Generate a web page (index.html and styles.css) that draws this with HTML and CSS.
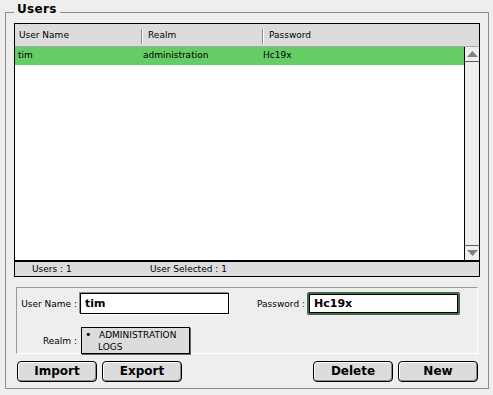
FILE: index.html
```html
<!DOCTYPE html>
<html>
<head>
<meta charset="utf-8">
<link rel="stylesheet" href="styles.css">
</head>
<body>
<div class="group">
  <div class="title">Users</div>
  <div class="table">
    <div class="thead">
      <div class="th c1">User Name</div>
      <div class="th c2 sep">Realm</div>
      <div class="th c3 sep">Password</div>
    </div>
    <div class="tbody">
      <div class="list">
        <div class="row sel">
          <div class="td c1">tim</div>
          <div class="td c2">administration</div>
          <div class="td c3">Hc19x</div>
        </div>
      </div>
      <div class="scroll">
        <div class="sbtn up"><svg width="11" height="6" viewBox="0 0 11 6"><polygon points="5.5,0 11,6 0,6" fill="#808080"/></svg></div>
        <div class="track"></div>
        <div class="sbtn down"><svg width="11" height="6" viewBox="0 0 11 6"><polygon points="0,0 11,0 5.5,6" fill="#808080"/></svg></div>
      </div>
    </div>
    <div class="status">
      <span class="st1">Users : 1</span>
      <span class="st2">User Selected : 1</span>
    </div>
  </div>
  <div class="edit">
    <div class="erow">
      <label class="lbl">User Name :</label>
      <div class="field name">tim</div>
      <label class="lbl lbl2">Password :</label>
      <div class="focus"><div class="field pass">Hc19x</div></div>
    </div>
    <div class="erow realmrow">
      <label class="lbl">Realm :</label>
      <div class="realm">
        <div class="opt"><span class="dot">•</span>ADMINISTRATION</div>
        <div class="opt opt2">LOGS</div>
      </div>
    </div>
  </div>
  <div class="buttons">
    <button class="btn">Import</button>
    <button class="btn">Export</button>
    <div class="spacer"></div>
    <button class="btn">Delete</button>
    <button class="btn">New</button>
  </div>
</div>
</body>
</html>
```
FILE: styles.css
```css
* { box-sizing: border-box; }
html, body { margin: 0; padding: 0; }
body {
  background: #eeeeee;
  font-family: "DejaVu Sans", sans-serif;
  font-size: 9px;
  color: #000;
  width: 493px;
  height: 395px;
  overflow: hidden;
}
.group {
  position: relative;
  margin: 12px 0 0 5px;
  width: 484px;
  height: 377px;
  border: 1px solid #8c8c8c;
  padding: 10px 0 0 8px;
}
.title {
  position: absolute;
  top: -11px;
  left: 8px;
  padding: 0 3px;
  background: #eeeeee;
  font-weight: bold;
  font-size: 12px;
  line-height: 14px;
  letter-spacing: 0.3px;
}
.table {
  width: 466px;
  height: 254px;
  border: 1px solid #000;
  background: #fff;
  display: flex;
  flex-direction: column;
}
.thead {
  display: flex;
  height: 23px;
  background: #dcdcdc;
  border-bottom: 1px solid #a8a8a8;
  flex: none;
}
.th {
  position: relative;
  line-height: 23px;
}
.th.c1 { width: 126px; padding-left: 4px; }
.th.c2 { width: 121px; padding-left: 7px; }
.th.c3 { flex: 1; padding-left: 7px; }
.sep::before {
  content: "";
  position: absolute;
  left: 0;
  top: 5px;
  bottom: 2px;
  width: 1px;
  background: #8a8a8a;
  box-shadow: 1px 0 0 #ffffff;
}
.tbody {
  display: flex;
  height: 213px;
  flex: none;
}
.list {
  width: 449px;
  background: #fff;
}
.row {
  display: flex;
  height: 18px;
  line-height: 17px;
}
.row.sel { background: #66cc66; }
.td.c1 { width: 126px; padding-left: 3px; }
.td.c2 { width: 121px; padding-left: 2px; }
.td.c3 { flex: 1; padding-left: 1px; }
.scroll {
  width: 15px;
  border-left: 1px solid #000;
  background: #eeeeee;
  display: flex;
  flex-direction: column;
}
.sbtn {
  height: 15px;
  display: flex;
  align-items: center;
  justify-content: center;
  flex: none;
}
.sbtn.up { border-bottom: 1px solid #5a5a5a; }
.sbtn.down { border-top: 1px solid #5a5a5a; }
.track { flex: 1; }
.status {
  height: 16px;
  border-top: 2px solid #000;
  background: #dcdcdc;
  display: flex;
  line-height: 14px;
  flex: none;
}
.st1 { padding-left: 17px; width: 135px; }
.edit {
  margin: 10px 0 0 2px;
  width: 462px;
  height: 67px;
  border-top: 1px solid #9a9a9a;
  border-left: 1px solid #9a9a9a;
  border-right: 1px solid #ffffff;
  border-bottom: 1px solid #ffffff;
  padding-top: 4px;
}
.erow {
  display: flex;
  align-items: center;
}
.lbl {
  width: 60px;
  text-align: right;
  margin-right: 3px;
  font-size: 9px;
}
.lbl2 {
  width: 73px;
  margin-left: 3px;
  margin-right: 2px;
}
.field {
  height: 21px;
  background: #fff;
  border: 1px solid #000;
  box-shadow: -1px -1px 0 #8a8a8a, 1px 1px 0 #ffffff;
  font-weight: bold;
  font-size: 11px;
  line-height: 19px;
  padding-left: 4px;
}
.name { width: 149px; }
.focus {
  padding: 2px;
  background: #3d6b3d;
  border-radius: 2px;
}
.pass {
  width: 149px;
  height: 19px;
  line-height: 17px;
  box-shadow: none;
}
.realmrow {
  margin-top: 12px;
}
.realm {
  margin-left: 1px;
  width: 109px;
  height: 27px;
  background: #dcdcdc;
  border: 1px solid #000;
  box-shadow: 1px 1px 0 #6a6a6a;
  padding-top: 1px;
  font-size: 9px;
  line-height: 12px;
}
.opt { padding-left: 3px; }
.dot { display: inline-block; width: 14px; font-size: 11px; line-height: 10px; }
.opt2 { padding-left: 16px; }
.buttons {
  display: flex;
  margin: 7px 0 0 3px;
  width: 461px;
  gap: 5px;
}
.spacer { flex: 1; }
.btn {
  width: 80px;
  height: 21px;
  background: #dcdcdc;
  border: 1px solid #000;
  border-radius: 4px;
  box-shadow: inset 1px 1px 0 #ffffff, inset -1px -1px 0 #8a8a8a;
  font-family: "DejaVu Sans", sans-serif;
  font-weight: bold;
  font-size: 12px;
  line-height: 17px;
  padding: 0;
  color: #000;
}
```
